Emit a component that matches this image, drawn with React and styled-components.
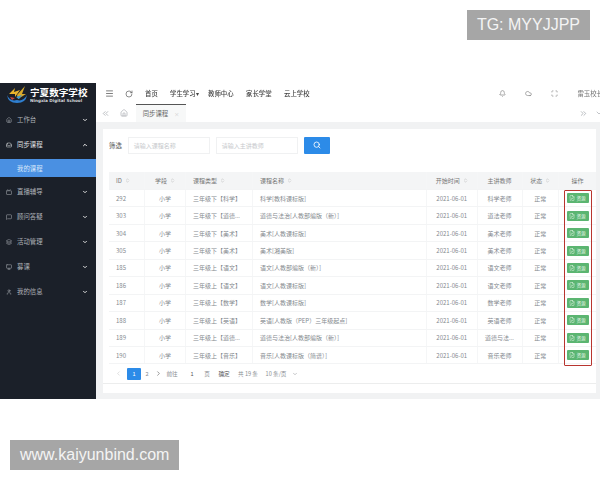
import React from "react";
import styled, { createGlobalStyle } from "styled-components";
import {
  Bell,
  ChevronDown,
  ChevronLeft,
  ChevronRight,
  ChevronUp,
  ChevronsLeft,
  ChevronsRight,
  ChevronsUpDown,
  CircleUser,
  Cloud,
  FilePen,
  Home,
  Inbox,
  Layers,
  Menu,
  MessageSquare,
  Monitor,
  RotateCw,
  Scan,
  Search,
  Tv,
  User,
} from "lucide-react";

const GlobalStyle = createGlobalStyle`
  html, body {
    margin: 0;
    padding: 0;
    background: #fff;
    overflow: hidden;
  }
  body {
    font-family: "Noto Sans CJK SC", "Noto Sans", sans-serif;
  }
`;

const Page = styled.div`
  width: 600px;
  height: 480px;
  display: flex;
  flex-direction: column;
  overflow: hidden;
`;

const TopBand = styled.div`
  height: 83px;
  box-sizing: border-box;
  padding: 10px 10px 0 0;
  display: flex;
  justify-content: flex-end;
  align-items: flex-start;
`;

const BottomBand = styled.div`
  flex: 1;
  box-sizing: border-box;
  padding: 41px 0 0 10px;
  display: flex;
  align-items: flex-start;
`;

const Watermark = styled.div`
  height: 30px;
  line-height: 30px;
  padding: 0 10px;
  background: #a6a6a6;
  color: #f4f4f4;
  font-family: "Liberation Sans", Arial, sans-serif;
  font-size: 16px;
  white-space: nowrap;
`;

const Shell = styled.div`
  height: 316px;
  display: flex;
  background: #f1f2f3;
  filter: blur(0.45px);
`;

const Sidebar = styled.aside`
  width: 96px;
  flex: none;
  background: #1b2029;
  color: #c4c7cc;
`;

const Brand = styled.div`
  height: 23px;
  display: flex;
  align-items: center;
  padding-left: 6px;
  gap: 2px;
  margin-bottom: 1px;
`;

const BrandText = styled.div`
  display: flex;
  flex-direction: column;
  color: #fff;
  line-height: 1;
`;

const BrandTitle = styled.span`
  font-size: 9.6px;
  font-weight: 700;
  line-height: 11px;
  white-space: nowrap;
`;

const BrandSub = styled.span`
  font-family: "DejaVu Sans", sans-serif;
  font-size: 4.2px;
  font-weight: 700;
  line-height: 5px;
  color: #d5d8dc;
  white-space: nowrap;
`;

const NavItem = styled.div`
  height: 25px;
  display: flex;
  align-items: center;
  padding: 0 8px 0 6px;
  gap: 5px;
  font-size: 6.4px;
  color: ${(p) => (p.$open ? "#e2e4e7" : "#aeb2b8")};
`;

const NavLabel = styled.span`
  flex: 1;
`;

const SubItem = styled.div`
  height: 18px;
  margin-top: 2px;
  margin-bottom: 2px;
  display: flex;
  align-items: center;
  padding-left: 17px;
  background: #4a90e2;
  color: #d9e9fb;
  font-size: 6.4px;
`;

const Main = styled.main`
  flex: 1;
  min-width: 0;
  display: flex;
  flex-direction: column;
`;

const Header = styled.header`
  height: 21px;
  flex: none;
  background: #fff;
  display: flex;
  align-items: center;
  padding-left: 9px;
  color: #555;
`;

const HeaderNav = styled.nav`
  display: flex;
  align-items: center;
  margin-left: 12px;
  font-size: 6.4px;
  font-weight: 500;
  color: #444;
`;

const HeaderLink = styled.span`
  width: ${(p) => p.$w}px;
  white-space: nowrap;
`;

const HeaderRight = styled.div`
  margin-left: auto;
  display: flex;
  align-items: center;
  gap: 19px;
  color: #777;
  padding-right: 0;
  margin-right: -3px;
  white-space: nowrap;
  font-size: 6.4px;
`;

const TabBar = styled.div`
  height: 18px;
  flex: none;
  background: #fff;
  display: flex;
  align-items: center;
  padding-left: 5px;
  color: #a4a8ad;
`;

const Tab = styled.div`
  width: 50px;
  height: 18px;
  box-sizing: border-box;
  margin-left: 8px;
  border-top: 1px solid #555;
  background: #f7f8f8;
  display: flex;
  align-items: center;
  justify-content: center;
  gap: 6px;
  font-size: 6.4px;
  color: #666;
`;

const TabClose = styled.span`
  color: #c5c5c5;
  font-size: 5px;
`;

const TabEnd = styled.div`
  margin-left: auto;
  display: flex;
  align-items: center;
  gap: 7px;
  margin-right: -3px;
`;

const Card = styled.section`
  margin: 7px 4px 0 7px;
  height: 257px;
  background: #fff;
  padding: 7px 0 0 6px;
  display: flex;
  flex-direction: column;
`;

const Filter = styled.div`
  height: 18px;
  display: flex;
  align-items: center;
  gap: 6px;
  font-size: 6.4px;
  color: #555;
  margin-bottom: 18px;
`;

const FilterInput = styled.div`
  width: 82px;
  height: 17px;
  box-sizing: border-box;
  border: 1px solid #f0f1f2;
  padding-left: 5px;
  display: flex;
  align-items: center;
  color: #c6c9cc;
  font-size: 6px;
`;

const SearchButton = styled.button`
  width: 26px;
  height: 17px;
  border: none;
  padding: 0;
  border-radius: 1px;
  background: #2c8be8;
  color: #fff;
  display: flex;
  align-items: center;
  justify-content: center;
`;

const TableWrap = styled.div`
  position: relative;
`;

const Row = styled.div`
  display: grid;
  grid-template-columns: 36px 41px 67px 174px 50.5px 45px 36.5px 37px;
  height: ${(p) => (p.$head ? 18 : 17.45)}px;
  box-sizing: border-box;
  background: ${(p) => (p.$head ? "#f4f5f6" : "#fff")};
  border-bottom: 1px solid #f3f4f5;
  font-size: 6px;
  color: ${(p) => (p.$head ? "#777" : "#858a8f")};
`;

const Cell = styled.div`
  display: flex;
  align-items: center;
  justify-content: ${(p) => (p.$left ? "flex-start" : "center")};
  gap: 3px;
  padding-left: ${(p) => (p.$left ? 7 : 0)}px;
  border-right: ${(p) => (p.$last ? "none" : "1px solid #f5f6f7")};
  white-space: nowrap;
  overflow: hidden;
`;

const ResourceButton = styled.div`
  width: 22px;
  height: 10px;
  margin-right: 0;
  background: #5bb571;
  border-radius: 1px;
  color: #e8f6ea;
  font-size: 4.6px;
  display: flex;
  align-items: center;
  justify-content: center;
  gap: 1px;
`;

const Highlight = styled.div`
  position: absolute;
  left: 455px;
  top: 18px;
  width: 28px;
  height: 176px;
  box-sizing: border-box;
  border: 1.5px solid #b8352f;
  border-radius: 1px;
  pointer-events: none;
`;

const Pager = styled.div`
  height: 19px;
  display: flex;
  align-items: center;
  padding-left: 6px;
  font-size: 5.6px;
  color: #8a8e93;
`;

const PageNum = styled.span`
  width: ${(p) => p.$w}px;
  height: 12px;
  margin-right: ${(p) => p.$mr || 0}px;
  display: flex;
  align-items: center;
  justify-content: center;
  flex: none;
  border-radius: 1px;
  white-space: nowrap;
  background: ${(p) => (p.$active ? "#2c8be8" : "transparent")};
  color: ${(p) => (p.$active ? "#fff" : p.$dark ? "#555" : "inherit")};
  font-family: "Noto Sans CJK SC", sans-serif;
`;

const FooterRule = styled.div`
  height: 1px;
  background: #eceded;
  margin-left: -6px;
`;

const menus = [
  { label: "直播辅导", Icon: Tv },
  { label: "顾问答疑", Icon: MessageSquare },
  { label: "活动管理", Icon: Layers },
  { label: "募课", Icon: Monitor },
  { label: "我的信息", Icon: User },
];

const rows = [
  ["292", "三年级下【科学】", "科学[教科课标版]", "科学老师"],
  ["303", "三年级下【道德...", "道德与法治[人教部编版（新）]", "道法老师"],
  ["304", "三年级下【美术】", "美术[人教课标版]", "美术老师"],
  ["305", "三年级下【美术】", "美术[湘美版]", "美术老师"],
  ["185", "三年级上【语文】", "语文[人教部编版（新）]", "语文老师"],
  ["186", "三年级上【语文】", "语文[人教课标版]", "语文老师"],
  ["187", "三年级上【数学】", "数学[人教课标版]", "数学老师"],
  ["188", "三年级上【英语】", "英语[人教版（PEP）三年级起点]", "英语老师"],
  ["189", "三年级上【道德...", "道德与法治[人教部编版（新）]", "道德与法..."],
  ["190", "三年级上【音乐】", "音乐[人教课标版（简谱）]", "音乐老师"],
];

function Logo() {
  return (
    <svg width="22" height="19" viewBox="0 0 22 19">
      <path d="M1 10 Q4 17 11 15 Q17 17 21 10 Q20 18 11 18 Q2 18 1 10Z" fill="#2f7fd0" />
      <path d="M3 9 L9 3 L8 7 L14 5 L9 12 L9 9Z" fill="#e9b52c" />
      <path d="M11 10 L19 1 L16 9 L20 9 L12 14Z" fill="#d9a92b" />
      <path d="M4 12 L9 13 L6 15Z" fill="#c9463c" />
      <path d="M10 12 L16 10 L13 14Z" fill="#3a9bd8" />
    </svg>
  );
}

function SortMark() {
  return <ChevronsUpDown size={5} strokeWidth={2} color="#aaa" />;
}

export default function App() {
  return (
    <Page>
      <GlobalStyle />
      <TopBand>
        <Watermark>TG: MYYJJPP</Watermark>
      </TopBand>
      <Shell>
        <Sidebar>
          <Brand>
            <Logo />
            <BrandText>
              <BrandTitle>宁夏数字学校</BrandTitle>
              <BrandSub>Ningxia Digital School</BrandSub>
            </BrandText>
          </Brand>
          <NavItem>
            <Home size={6} />
            <NavLabel>工作台</NavLabel>
            <ChevronDown size={6} strokeWidth={4} color="#ddd" />
          </NavItem>
          <NavItem $open>
            <Inbox size={6} />
            <NavLabel>同步课程</NavLabel>
            <ChevronUp size={6} strokeWidth={4} color="#eee" />
          </NavItem>
          <SubItem>我的课程</SubItem>
          {menus.map(({ label, Icon }) => (
            <NavItem key={label}>
              <Icon size={6} />
              <NavLabel>{label}</NavLabel>
              <ChevronDown size={6} strokeWidth={4} color="#ddd" />
            </NavItem>
          ))}
        </Sidebar>
        <Main>
          <Header>
            <Menu size={9} />
            <RotateCw size={8} style={{ marginLeft: 11 }} />
            <HeaderNav>
              <HeaderLink $w={25}>首页</HeaderLink>
              <HeaderLink $w={38}>学生学习▾</HeaderLink>
              <HeaderLink $w={38}>教师中心</HeaderLink>
              <HeaderLink $w={38}>家长学堂</HeaderLink>
              <HeaderLink $w={30}>云上学校</HeaderLink>
            </HeaderNav>
            <HeaderRight>
              <Bell size={7} />
              <Cloud size={7} />
              <Scan size={7} />
              <span>雷玉校长</span>
            </HeaderRight>
          </Header>
          <TabBar>
            <ChevronsLeft size={9} />
            <Home size={8} style={{ marginLeft: 10 }} />
            <Tab>
              同步课程
              <TabClose>×</TabClose>
            </Tab>
            <TabEnd>
              <ChevronsRight size={9} />
              <ChevronDown size={8} />
            </TabEnd>
          </TabBar>
          <Card>
            <Filter>
              <span>筛选</span>
              <FilterInput>请输入课程名称</FilterInput>
              <FilterInput>请输入主讲教师</FilterInput>
              <SearchButton>
                <Search size={8} strokeWidth={2.5} />
              </SearchButton>
            </Filter>
            <TableWrap>
              <Row $head>
                <Cell $left>ID <SortMark /></Cell>
                <Cell>学段 <SortMark /></Cell>
                <Cell $left>课程类型 <SortMark /></Cell>
                <Cell $left>课程名称 <SortMark /></Cell>
                <Cell>开始时间 <SortMark /></Cell>
                <Cell>主讲教师</Cell>
                <Cell>状态 <SortMark /></Cell>
                <Cell $last>操作</Cell>
              </Row>
              {rows.map(([id, type, name, teacher]) => (
                <Row key={id}>
                  <Cell $left>{id}</Cell>
                  <Cell>小学</Cell>
                  <Cell $left>{type}</Cell>
                  <Cell $left>{name}</Cell>
                  <Cell>2021-06-01</Cell>
                  <Cell>{teacher}</Cell>
                  <Cell>正常</Cell>
                  <Cell $last>
                    <ResourceButton>
                      <FilePen size={6} />
                      资源
                    </ResourceButton>
                  </Cell>
                </Row>
              ))}
              <Highlight />
            </TableWrap>
            <Pager>
              <ChevronLeft size={7} color="#ccc" style={{ marginRight: 5 }} />
              <PageNum $w={14} $active $mr={0}>1</PageNum>
              <PageNum $w={12} $mr={2}>2</PageNum>
              <ChevronRight size={7} color="#555" style={{ marginRight: 4 }} />
              <PageNum $w={12} $mr={7}>前往</PageNum>
              <PageNum $w={14} $dark $mr={4}>1</PageNum>
              <PageNum $w={8} $mr={6}>页</PageNum>
              <PageNum $w={14} $dark $mr={6}>确定</PageNum>
              <PageNum $w={22} $mr={6}>共 19 条</PageNum>
              <PageNum $w={22} $mr={5}>10 条/页</PageNum>
              <ChevronDown size={6} />
            </Pager>
            <FooterRule />
          </Card>
        </Main>
      </Shell>
      <BottomBand>
        <Watermark>www.kaiyunbind.com</Watermark>
      </BottomBand>
    </Page>
  );
}
